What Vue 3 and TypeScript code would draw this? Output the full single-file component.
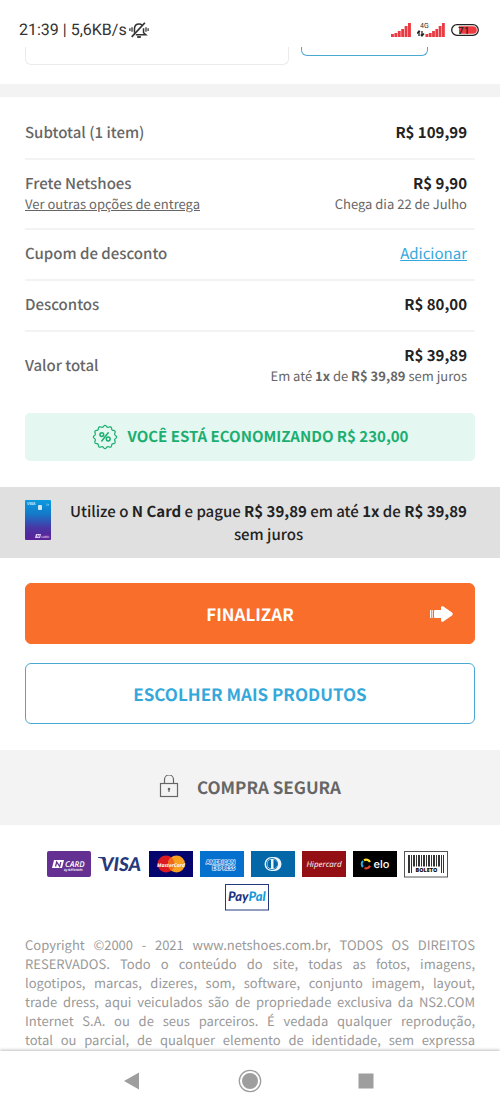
<script setup lang="ts">
interface Brand {
  id: string
  name: string
}

const brands: Brand[] = [
  { id: 'ncard', name: 'N Card' },
  { id: 'visa', name: 'Visa' },
  { id: 'master', name: 'MasterCard' },
  { id: 'amex', name: 'American Express' },
  { id: 'diners', name: 'Diners Club' },
  { id: 'hiper', name: 'Hipercard' },
  { id: 'elo', name: 'Elo' },
  { id: 'boleto', name: 'Boleto' },
  { id: 'paypal', name: 'PayPal' },
]

// Heights of the six signal bars, left to right
const signalBars: number[] = [3, 4, 6, 8, 11, 14]

// Barcode stripes as [x, width]
const stripes: [number, number][] = [
  [4, 2], [7, 1], [9, 2], [12, 1], [14, 2], [17, 1], [19, 2], [22, 1],
  [24, 2], [27, 1], [29, 2], [32, 1], [34, 2], [37, 1], [39, 1],
]

// Twelve-lobed outline of the discount seal
function sealPath(): string {
  const points: string[] = []
  for (let i = 0; i < 144; i++) {
    const a = (i / 144) * Math.PI * 2
    const r = 10.8 + 0.8 * Math.cos(a * 12)
    points.push(`${(13 + r * Math.sin(a)).toFixed(2)} ${(13 - r * Math.cos(a)).toFixed(2)}`)
  }
  return `M${points.join('L')}Z`
}
</script>

<template>
  <div class="screen">
    <header class="status">
      <span class="clock">21:39 | 5,6KB/s</span>
      <svg class="bell" width="20" height="18" viewBox="0 0 22 18" fill="none" stroke="#333" stroke-width="1.700">
        <path d="M6 12V7.500Q6.300 2.500 11 2.500q2.200 0 3.400 1.200M16 7v5l2.500 2.200H7.500" />
        <path d="M3 16.500 17.500 1" stroke-width="1.900" />
        <path d="M9 16.700h4" stroke-width="2" />
        <path d="M1 7v3M3.300 6v5M18.700 6v5M21 7v3" stroke-width="1.400" />
      </svg>
      <span class="spacer"></span>
      <svg width="20" height="14" viewBox="0 0 20 14" fill="#ea3a42">
        <rect v-for="(h, i) in signalBars" :key="i" :x="i * 3.4" :y="14 - h" width="2.900" :height="h" />
      </svg>
      <svg width="28" height="16" viewBox="0 0 28 16">
        <text x="3" y="6" font-family="Roboto, sans-serif" font-size="7" fill="#333">4G</text>
        <path d="M2 9.500v4.500M0 11.500l2-2.500 1 1M5 9v4.500M3.800 12.500l1.200 1.500 2-2.500" stroke="#222" stroke-width="1.300" fill="none" />
        <g fill="#ea3a42">
          <rect v-for="(h, i) in signalBars" :key="i" :x="8.5 + i * 3.3" :y="15 - h" width="2.800" :height="h" />
        </g>
      </svg>
      <svg width="28" height="12" viewBox="0 0 28 12">
        <rect x="0.700" y="0.700" width="26.600" height="10.600" rx="5.300" fill="#fff" stroke="#222" stroke-width="1.300" />
        <path d="M8 2.200h14a3.800 3.800 0 0 1 0 7.600H8z" fill="#f03a42" />
        <text x="7" y="9.700" font-family="Roboto, sans-serif" font-size="10" font-weight="500" fill="#222">71</text>
      </svg>
    </header>

    <main class="content">
      <div class="cut-fields">
        <div class="cut-box"></div>
        <div class="cut-button"></div>
      </div>
      <div class="band"></div>

      <dl class="summary">
        <div class="row">
          <dt>Subtotal (1 item)</dt>
          <dd><strong>R$ 109,99</strong></dd>
        </div>
        <div class="row">
          <dt>Frete Netshoes<a class="small" href="#entrega">Ver outras opções de entrega</a></dt>
          <dd><strong>R$ 9,90</strong><span class="small">Chega dia 22 de Julho</span></dd>
        </div>
        <div class="row">
          <dt>Cupom de desconto</dt>
          <dd><a class="add" href="#cupom">Adicionar</a></dd>
        </div>
        <div class="row">
          <dt>Descontos</dt>
          <dd><strong>R$ 80,00</strong></dd>
        </div>
        <div class="row total">
          <dt>Valor total</dt>
          <dd><strong>R$ 39,89</strong><span class="small">Em até <b>1x</b> de <b>R$ 39,89</b> sem juros</span></dd>
        </div>
      </dl>

      <p class="saving">
        <svg width="26" height="26" viewBox="0 0 26 26" fill="none" stroke="#1aae71" stroke-width="1.200">
          <path :d="sealPath()" stroke-linejoin="round" />
          <g stroke-width="1.500">
            <circle cx="9.800" cy="10.600" r="1.900" />
            <circle cx="16.200" cy="15" r="1.900" />
            <path d="M16.200 8.800 9.800 17" stroke-linecap="round" />
          </g>
        </svg>
        <span>VOCÊ ESTÁ ECONOMIZANDO R$ 230,00</span>
      </p>

      <section class="ncard">
        <svg width="26" height="40" viewBox="0 0 26 40">
          <defs>
            <linearGradient id="cardFill" x1="0" y1="0" x2="0" y2="1">
              <stop offset="0" stop-color="#0a9be0" />
              <stop offset="0.350" stop-color="#1479c9" />
              <stop offset="0.700" stop-color="#4a35a5" />
              <stop offset="1" stop-color="#5b2297" />
            </linearGradient>
          </defs>
          <rect width="26" height="40" rx="1" fill="url(#cardFill)" />
          <text x="2" y="5" font-family="Lato, sans-serif" font-size="4" font-weight="900" font-style="italic" fill="#d5f1ff">VISA</text>
          <rect x="13" y="5" width="4" height="5" rx="1" fill="#cfe6f5" />
          <path d="M22 3.500v2.500M23.500 4v1.500" stroke="#8fd0f5" stroke-width="0.700" />
          <path d="M11 34h5l-1 4h-5z" fill="#e3d5f7" />
          <path d="M12 37.200l.600-2.300 1.200 2.300.600-2.300" stroke="#5b2297" stroke-width="0.600" fill="none" />
          <text x="16" y="37.500" font-family="Lato, sans-serif" font-size="3" font-weight="700" fill="#d5c3f0">CARD</text>
        </svg>
        <p>Utilize o <b>N Card</b> e pague <b>R$ 39,89</b> em até <b>1x</b> de <b>R$ 39,89</b> sem juros</p>
      </section>

      <div class="actions">
        <button type="button" class="primary">
          <span>FINALIZAR</span>
          <svg width="23" height="16" viewBox="0 0 23 16" fill="#fff">
            <path d="M0 4h1.300v8H0zM2.200 4h.700v8h-.700z" />
            <path d="M5 4h6V1.500Q11.200-.300 13 .3L22 6.500Q23.600 8 22 9.500L13 15.700q-1.800.600-2-1.200V12H5Q4 12 4 11V5Q4 4 5 4z" />
          </svg>
        </button>
        <button type="button" class="secondary">ESCOLHER MAIS PRODUTOS</button>
      </div>

      <h2 class="secure">
        <svg width="20" height="24" viewBox="0 0 20 24" fill="none" stroke="#666" stroke-width="1.200">
          <rect x="1.500" y="8.500" width="17" height="13" />
          <path d="M5.500 8.500V4.500a4.500 4.500 0 0 1 9 0v4" />
          <circle cx="10" cy="14" r="1.300" fill="#666" stroke="none" />
          <path d="M10 14v3" />
        </svg>
        <span>COMPRA SEGURA</span>
      </h2>

      <ul class="brands">
        <li v-for="brand in brands" :key="brand.id">
          <svg width="44" height="27" viewBox="0 0 44 27" role="img" :aria-label="brand.name">
            <g v-if="brand.id === 'ncard'">
              <rect width="44" height="26" rx="2" fill="#643192" />
              <path d="M7 9h10l-2 8H5z" fill="#fff" />
              <path d="M8.500 15.500l1.200-4.500 3 4.500 1.200-4.500" stroke="#643192" stroke-width="1.300" fill="none" />
              <text x="18" y="15.500" class="sans italic" font-size="8" font-weight="600" fill="#fff">CARD</text>
              <text x="17" y="19.500" class="sans italic" font-size="3" font-weight="700" fill="#fff">by NETSHOES</text>
            </g>
            <g v-else-if="brand.id === 'visa'">
              <text x="3" y="20" class="lato italic" font-size="19" font-weight="900" fill="#26397a">VISA</text>
              <path d="M0 6h7l1.500 4Q5 7 0 6.700z" fill="#26397a" />
            </g>
            <g v-else-if="brand.id === 'master'">
              <rect width="44" height="26" fill="#05056e" />
              <circle cx="17" cy="13" r="8.500" fill="#dc1a22" />
              <circle cx="27.500" cy="13" r="8.500" fill="#f9a020" />
              <path d="M22.200 6.300a8.500 8.500 0 0 1 0 13.400 8.500 8.500 0 0 1 0-13.400z" fill="#ee6a1e" />
              <text x="22" y="15.500" text-anchor="middle" class="sans italic" font-size="5" font-weight="700" fill="#fff">MasterCard</text>
            </g>
            <g v-else-if="brand.id === 'amex'">
              <rect width="44" height="26" fill="#0670cf" />
              <g class="sans" font-size="5.500" font-weight="700" fill="#0670cf" stroke="#e5f3ff" stroke-width="1.200" paint-order="stroke">
                <text x="6" y="12.500">AMERICAN</text>
                <text x="12" y="19">EXPRESS</text>
              </g>
            </g>
            <g v-else-if="brand.id === 'diners'">
              <rect width="44" height="26" fill="#0367a8" />
              <rect x="13.500" y="6" width="17" height="14" rx="7" fill="#e9f4fb" />
              <circle cx="21" cy="13" r="6" fill="#0367a8" />
              <circle cx="21" cy="13" r="5.200" fill="#e9f4fb" />
              <path d="M20 8.500v9a4.600 4.600 0 0 1 0-9zM22.500 8.500v9a4.600 4.600 0 0 0 0-9z" fill="#0367a8" />
            </g>
            <g v-else-if="brand.id === 'hiper'">
              <rect width="44" height="26" fill="#930f14" />
              <text x="22" y="15.500" text-anchor="middle" class="sans italic" font-size="8" font-weight="400" fill="#fff">Hipercard</text>
            </g>
            <g v-else-if="brand.id === 'elo'">
              <rect width="44" height="26" fill="#000" />
              <g fill="none" stroke-width="2.200">
                <path d="M11 9.300A4.300 4.300 0 0 1 17 11" stroke="#ffe02e" />
                <path d="M10 16A4.300 4.300 0 0 1 10 10" stroke="#24aee4" />
                <path d="M17 14.700A4.300 4.300 0 0 1 11.500 17" stroke="#e8402c" />
              </g>
              <text x="20.500" y="16.500" class="inter" font-size="11" font-weight="500" fill="#fff">elo</text>
            </g>
            <g v-else-if="brand.id === 'boleto'">
              <rect x="0.500" y="0.500" width="43" height="25.500" fill="#fff" stroke="#555" />
              <rect v-for="[x, w] in stripes" :key="x" :x="x" y="4" :width="w" height="18" fill="#333" />
              <rect x="8" y="15.500" width="29" height="8" fill="#fff" />
              <text x="22.500" y="21" text-anchor="middle" class="sans" font-size="5.500" font-weight="800" fill="#111">BOLETO</text>
            </g>
            <g v-else>
              <rect x="0.500" y="0.500" width="43" height="25.500" fill="#fff" stroke="#253b80" />
              <text x="3" y="17" class="lato italic" font-size="13" font-weight="900"><tspan fill="#1b3380">Pay</tspan><tspan fill="#179bd7">Pal</tspan></text>
            </g>
          </svg>
        </li>
      </ul>

      <p class="legal">
        Copyright ©2000 - 2021 www.netshoes.com.br, TODOS OS DIREITOS<br />
        RESERVADOS. Todo o conteúdo do site, todas as fotos, imagens,<br />
        logotipos, marcas, dizeres, som, software, conjunto imagem, layout,<br />
        trade dress, aqui veiculados são de propriedade exclusiva da NS2.COM<br />
        Internet S.A. ou de seus parceiros. É vedada qualquer reprodução,<br />
        total ou parcial, de qualquer elemento de identidade, sem expressa
      </p>
    </main>

    <nav class="system-nav">
      <button type="button" aria-label="Voltar">
        <svg width="24" height="24" viewBox="0 0 24 24" fill="#9e9e9e"><path d="M2 12 17 3.500v17z" /></svg>
      </button>
      <button type="button" aria-label="Início">
        <svg width="24" height="24" viewBox="0 0 24 24">
          <circle cx="12" cy="12" r="10.700" fill="none" stroke="#9e9e9e" stroke-width="1.300" />
          <circle cx="12" cy="12" r="8" fill="#9e9e9e" />
        </svg>
      </button>
      <button type="button" aria-label="Recentes">
        <svg width="24" height="24" viewBox="0 0 24 24" fill="#9e9e9e"><rect x="4.500" y="4.500" width="15" height="15" /></svg>
      </button>
    </nav>
  </div>
</template>

<style>
body {
  margin: 0;
  background: #fff;
}
</style>

<style scoped>
.screen {
  display: flex;
  flex-direction: column;
  height: 100vh;
  background: #fff;
  color: #666;
  font-family: "Noto Sans CJK SC", "Open Sans", sans-serif;
  font-size: 15px;
  line-height: 20px;
  text-rendering: geometricPrecision;
}
svg {
  display: block;
  flex: none;
}
.status {
  display: flex;
  align-items: center;
  gap: 6px;
  flex: none;
  height: 47px;
  padding: 13px 21px 0 19px;
  box-sizing: border-box;
  font-family: Roboto, sans-serif;
  font-size: 16px;
  color: #333;
}
.bell {
  margin-left: -4px;
}
.spacer {
  flex: 1;
}
.content {
  flex: 1;
  min-height: 0;
  overflow: hidden;
}
.cut-fields {
  display: grid;
  grid-template-columns: 263fr 127fr 47fr;
  gap: 12px;
  height: 37px;
  padding: 0 13px 0 25px;
}
.cut-box {
  height: 18px;
  box-sizing: border-box;
  border: 1px solid #ebebeb;
  border-top: 0;
  border-radius: 0 0 6px 6px;
}
.cut-button {
  height: 9px;
  box-sizing: border-box;
  border: 1px solid #4aa9d2;
  border-top: 0;
  border-radius: 0 0 6px 6px;
}
.band {
  height: 13px;
  background: #f3f3f3;
}
.summary {
  margin: 0;
  padding: 12px 25px 0;
}
.row {
  display: flex;
  justify-content: space-between;
  align-items: center;
  padding: 14px 8px 15px 0;
  border-bottom: 2px solid #f3f3f3;
}
.row.total {
  padding-bottom: 28px;
  border-bottom: 0;
}
dt {
  font-weight: 500;
}
dd {
  margin: 0;
  text-align: right;
}
dd strong {
  font-weight: 700;
  color: #222;
}
.small {
  display: block;
  font-size: 13px;
  font-weight: 400;
  line-height: 19px;
  color: #666;
}
.add {
  color: #35a8db;
}
.saving {
  display: flex;
  align-items: center;
  justify-content: center;
  gap: 10px;
  height: 48px;
  margin: 0 25px 26px;
  border-radius: 5px;
  background: #e4f7f0;
  color: #1aae71;
  font-weight: 700;
}
.ncard {
  display: flex;
  align-items: flex-start;
  gap: 18px;
  padding: 13px 32px 12px 25px;
  background: #e0e0e0;
  color: #222;
}
.ncard p {
  flex: 1;
  margin: 0;
  font-weight: 500;
  line-height: 23px;
  text-align: center;
}
.actions {
  display: flex;
  flex-direction: column;
  gap: 19px;
  padding: 25px 25px 26px;
}
.actions button {
  height: 61px;
  padding: 0 21px;
  border-radius: 6px;
  font-family: inherit;
  font-size: 17px;
  font-weight: 700;
  text-rendering: inherit;
}
.primary {
  display: grid;
  grid-template-columns: 1fr auto 1fr;
  align-items: center;
  border: 1px solid #f86e2a;
  background: #f86e2a;
  color: #fff;
}
.primary span {
  grid-column: 2;
}
.primary svg {
  justify-self: end;
}
.secondary {
  border: 1px solid #4aa9d2;
  background: #fff;
  color: #35a8db;
}
.secure {
  display: flex;
  align-items: center;
  justify-content: center;
  gap: 18px;
  height: 75px;
  box-sizing: border-box;
  margin: 0;
  padding-bottom: 1px;
  background: #f3f3f3;
  font-size: 17px;
  font-weight: 700;
}
.brands {
  display: flex;
  flex-wrap: wrap;
  justify-content: center;
  gap: 6px 7px;
  margin: 0;
  padding: 26px 31px 24px 25px;
  list-style: none;
}
.sans {
  font-family: "Open Sans", sans-serif;
}
.lato {
  font-family: Lato, sans-serif;
}
.inter {
  font-family: Inter, sans-serif;
}
.italic {
  font-style: italic;
}
.legal {
  margin: 0 25px;
  color: #999;
  font-size: 13px;
  line-height: 19px;
  text-align: justify;
  text-align-last: justify;
}
.system-nav {
  display: flex;
  justify-content: center;
  align-items: center;
  gap: 92px;
  flex: none;
  height: 60px;
  position: relative;
  background: #fff;
  box-shadow: 0 -1px 3px rgba(0, 0, 0, 0.25);
}
.system-nav button {
  padding: 0;
  border: 0;
  background: none;
}
</style>
